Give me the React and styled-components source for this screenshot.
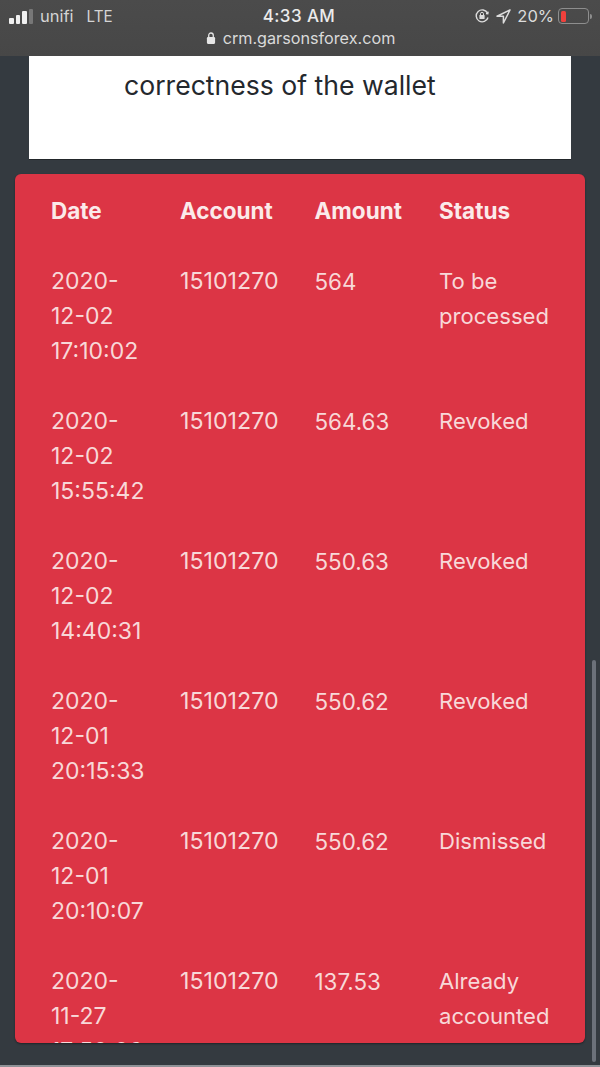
import React from "react";
import styled, { createGlobalStyle } from "styled-components";

const Global = createGlobalStyle`
  html, body { margin: 0; padding: 0; height: 1067px; overflow: hidden; background: #343a40; }
  body { font-family: Inter, "Liberation Sans", sans-serif; }
`;

const Screen = styled.div`
  position: relative;
  width: 600px;
  height: 1067px;
  background: #343a40;
  overflow: hidden;
  display: flex;
  flex-direction: column;
  box-shadow: inset 0 -2px 0 #8f9297;
`;

const StatusBar = styled.header`
  height: 56px;
  flex: none;
  box-sizing: border-box;
  padding: 5px 11px 0 9px;
  background: linear-gradient(#4b4b4b, #474747);
  color: #e4e4e4;
  display: flex;
  flex-direction: column;
  align-items: stretch;
`;

const StatusRow = styled.div`
  height: 22px;
  display: grid;
  grid-template-columns: 1fr auto 1fr;
  align-items: center;
`;

const Carrier = styled.div`
  display: flex;
  align-items: center;
  gap: 13px;
  font-size: 16.5px;
  color: #d4d4d4;
`;

const CarrierName = styled.span`
  margin-left: -6px;
`;

const CarrierTech = styled.span`
  font-size: 15.2px;
`;

const Bars = styled.div`
  display: flex;
  align-items: flex-end;
  gap: 2px;
  height: 15px;
`;

const Bar = styled.span`
  width: 4.5px;
  height: ${(p) => p.$h}px;
  border-radius: 1px;
  background: ${(p) => (p.$off ? "#777" : "#f0f0f0")};
`;

const Clock = styled.div`
  font-size: 17px;
  font-weight: 500;
  letter-spacing: 0.4px;
  color: #ececec;
`;

const Tray = styled.div`
  display: flex;
  align-items: center;
  justify-content: flex-end;
  gap: 6px;
  font-size: 16.5px;
  color: #dcdcdc;
`;

const Battery = styled.div`
  width: 31px;
  height: 16px;
  margin-left: -2px;
  box-sizing: border-box;
  border: 1.5px solid #8e8e8e;
  border-radius: 4px;
  padding: 1.5px 2px;
  display: flex;
`;

const BatteryLevel = styled.span`
  width: 5px;
  border-radius: 1.5px;
  background: #f0413c;
`;

const BatteryTip = styled.span`
  width: 2px;
  height: 5px;
  margin: 0 -3px 0 -5px;
  border-radius: 0 2px 2px 0;
  background: #8e8e8e;
`;

const Address = styled.div`
  height: 22px;
  display: flex;
  align-items: center;
  justify-content: center;
  gap: 7px;
  padding-left: 3px;
  font-size: 16.2px;
  color: #dadada;
`;

const Notice = styled.section`
  flex: none;
  box-sizing: border-box;
  height: 103px;
  margin: 0 29px;
  padding: 12px 0 0 95px;
  background: #fff;
  color: #24282d;
  font-size: 26.6px;
  line-height: 34px;
  box-shadow: 0 1px 0 #22262a;
`;

const Card = styled.section`
  flex: none;
  box-sizing: border-box;
  height: 869px;
  margin: 15px 15px 0;
  padding: 0 36px;
  background: #dc3545;
  border-radius: 6px;
  overflow: hidden;
  color: #f8d8d8;
  box-shadow: 0 1px 2px rgba(0, 0, 0, 0.4);
`;

const Table = styled.table`
  width: 498px;
  table-layout: fixed;
  border-collapse: collapse;
  line-height: 35px;
`;

const HeadCell = styled.th`
  padding: 19px 0 36px;
  text-align: left;
  font-weight: 700;
  color: #fbeaea;
  font-size: 22.5px;
`;

const Cell = styled.td`
  padding: 0 0 35px;
  vertical-align: top;
  font-size: ${(p) => p.$size}px;
`;

const Scrollbar = styled.div`
  position: absolute;
  left: 592px;
  top: 660px;
  width: 4px;
  height: 402px;
  border-radius: 2px;
  background: #6c717a;
`;

const rows = [
  [["2020-", "12-02", "17:10:02"], "15101270", "564", ["To be", "processed"]],
  [["2020-", "12-02", "15:55:42"], "15101270", "564.63", ["Revoked"]],
  [["2020-", "12-02", "14:40:31"], "15101270", "550.63", ["Revoked"]],
  [["2020-", "12-01", "20:15:33"], "15101270", "550.62", ["Revoked"]],
  [["2020-", "12-01", "20:10:07"], "15101270", "550.62", ["Dismissed"]],
  [["2020-", "11-27", "17:50:06"], "15101270", "137.53", ["Already", "accounted"]],
];

const Lines = ({ items }) =>
  items.map((t, i) => (
    <React.Fragment key={t}>
      {i > 0 && <br />}
      {t}
    </React.Fragment>
  ));

export default function App() {
  return (
    <Screen>
      <Global />
      <StatusBar>
        <StatusRow>
          <Carrier>
            <Bars>
              <Bar $h={6} />
              <Bar $h={9} />
              <Bar $h={13} />
              <Bar $h={15} $off />
            </Bars>
            <CarrierName>unifi</CarrierName>
            <CarrierTech>LTE</CarrierTech>
          </Carrier>
          <Clock>4:33 AM</Clock>
          <Tray>
            <svg width="16" height="16" viewBox="0 0 16 16" fill="none" stroke="#dcdcdc" strokeWidth="1.4">
              <path d="M13.6 5.2A6 6 0 1 0 14 9.5" />
              <path d="M12 5.5l1.8.2.3-2" />
              <rect x="5.4" y="7" width="5.2" height="4" rx=".6" fill="#dcdcdc" stroke="none" />
              <path d="M6.5 7V5.8a1.5 1.5 0 0 1 3 0V7" strokeWidth="1" />
            </svg>
            <svg width="15" height="15" viewBox="0 0 15 15" fill="none" stroke="#dcdcdc" strokeWidth="1.5" strokeLinejoin="round">
              <path d="M14 1L1 7.2h6.4V14z" />
            </svg>
            <span>20%</span>
            <Battery>
              <BatteryLevel />
            </Battery>
            <BatteryTip />
          </Tray>
        </StatusRow>
        <Address>
          <svg width="10" height="14" viewBox="0 0 11 14">
            <rect x="1" y="6" width="9" height="7.5" rx="1.2" fill="#e6e6e6" />
            <path d="M3 6.5V4a2.5 2.5 0 0 1 5 0v2.5" fill="none" stroke="#e6e6e6" strokeWidth="1.4" />
          </svg>
          <span>crm.garsonsforex.com</span>
        </Address>
      </StatusBar>
      <Notice>correctness of the wallet</Notice>
      <Card>
        <Table>
          <colgroup>
            <col style={{ width: 129 }} />
            <col style={{ width: 134.5 }} />
            <col style={{ width: 124.5 }} />
            <col />
          </colgroup>
          <thead>
            <tr>
              <HeadCell>Date</HeadCell>
              <HeadCell>Account</HeadCell>
              <HeadCell>Amount</HeadCell>
              <HeadCell>Status</HeadCell>
            </tr>
          </thead>
          <tbody>
            {rows.map((r, i) => (
              <tr key={i}>
                <Cell $size={23}><Lines items={r[0]} /></Cell>
                <Cell $size={23.2}>{r[1]}</Cell>
                <Cell $size={22.4}>{r[2]}</Cell>
                <Cell $size={22.1}><Lines items={r[3]} /></Cell>
              </tr>
            ))}
          </tbody>
        </Table>
      </Card>
      <Scrollbar />
    </Screen>
  );
}
